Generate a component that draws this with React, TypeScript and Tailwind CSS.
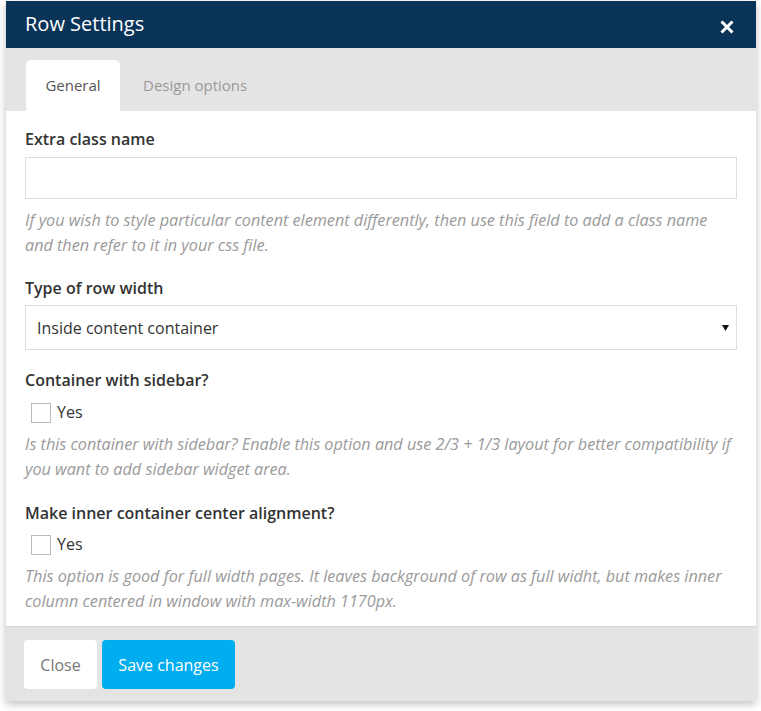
import { useState } from 'react'

function CloseIcon() {
  return (
    <svg width="14" height="14" viewBox="0 0 14 14" fill="none" aria-hidden="true">
      <path d="M1.5 1.5 L12.5 12.5 M12.5 1.5 L1.5 12.5" stroke="white" strokeWidth="3" />
    </svg>
  )
}

function Checkbox({ checked, onChange }: { checked: boolean; onChange: () => void }) {
  return (
    <button
      type="button"
      onClick={onChange}
      className="flex h-5 w-5 items-center justify-center border border-[#bbb] bg-white"
      aria-pressed={checked}
    >
      {checked ? <span className="h-2.5 w-2.5 bg-[#555]" /> : null}
    </button>
  )
}

const labelClass = 'block text-[16px] font-semibold leading-[22px] text-[#333]'
const helpClass = 'text-[16.2px] italic leading-[25px] text-[#9a9a9a]'

export default function App() {
  const [sidebar, setSidebar] = useState(false)
  const [center, setCenter] = useState(false)

  return (
    <div className="h-[711px] w-[761px] overflow-hidden bg-white font-['Open_Sans',sans-serif]">
      <div className="ml-[6px] mt-px flex w-[750px] flex-col shadow-[0_3px_8px_rgba(0,0,0,0.25)]">
        <header className="flex h-[47px] items-center justify-between bg-[#0a3358] pl-[19px] pr-[22px]">
          <h1 className="-mt-[2px] text-[20px] leading-none text-white">Row Settings</h1>
          <button type="button" className="mt-[5px]" aria-label="Close">
            <CloseIcon />
          </button>
        </header>

        <nav className="flex h-[63px] items-end bg-[#e4e4e4] pl-[20px]">
          <div className="flex h-[51px] w-[94px] items-center justify-center rounded-t-[5px] bg-white text-[15px] text-[#555]">
            General
          </div>
          <div className="flex h-[51px] items-center pl-[23px] text-[15px] text-[#999]">Design options</div>
        </nav>

        <main className="bg-white px-[19px] pb-[12px] pt-[17px]">
          <label className={labelClass}>Extra class name</label>
          <input
            type="text"
            className="mt-[7px] block h-[42px] w-[712px] border border-[#ddd] bg-white px-3 text-[16px] outline-none"
          />
          <p className={`mt-[9px] ${helpClass}`}>
            If you wish to style particular content element differently, then use this field to add a class name and then refer to it in your css file.
          </p>

          <label className={`mt-[19px] ${labelClass}`}>Type of row width</label>
          <div className="relative mt-[6px] h-[45px] w-[712px]">
            <select className="h-full w-full appearance-none border border-[#ddd] bg-white pl-[11px] text-[16px] text-[#333] outline-none">
              <option>Inside content container</option>
              <option>Full width</option>
            </select>
            <svg className="pointer-events-none absolute right-[8px] top-[20px]" width="7" height="6" viewBox="0 0 7 6">
              <path d="M0 0 H7 L3.5 6 Z" fill="#111" />
            </svg>
          </div>

          <label className={`mt-[19px] ${labelClass}`}>Container with sidebar?</label>
          <div className="mt-[12px] flex items-center gap-[6px] pl-[6px]">
            <Checkbox checked={sidebar} onChange={() => setSidebar((v) => !v)} />
            <span className="-mt-[3px] text-[16px] leading-5 text-[#333]">Yes</span>
          </div>
          <p className={`mt-[9px] ${helpClass}`}>
            Is this container with sidebar? Enable this option and use 2/3 + 1/3 layout for better compatibility if you want to add sidebar widget area.
          </p>

          <label className={`mt-[20px] ${labelClass}`}>Make inner container center alignment?</label>
          <div className="mt-[11px] flex items-center gap-[6px] pl-[6px]">
            <Checkbox checked={center} onChange={() => setCenter((v) => !v)} />
            <span className="-mt-[3px] text-[16px] leading-5 text-[#333]">Yes</span>
          </div>
          <p className={`mt-[9px] ${helpClass}`}>
            This option is good for full width pages. It leaves background of row as full widht, but makes inner column centered in window with max-width 1170px.
          </p>
        </main>

        <footer className="flex h-[75px] gap-[5px] border-t border-[#d5d5d5] bg-[#e4e4e4] pl-[18px] pt-[13px]">
          <button type="button" className="h-[49px] w-[73px] rounded-[4px] bg-white text-[16px] text-[#777]">
            Close
          </button>
          <button type="button" className="h-[49px] w-[133px] rounded-[4px] bg-[#00adef] text-[16px] text-white">
            Save changes
          </button>
        </footer>
      </div>
    </div>
  )
}
